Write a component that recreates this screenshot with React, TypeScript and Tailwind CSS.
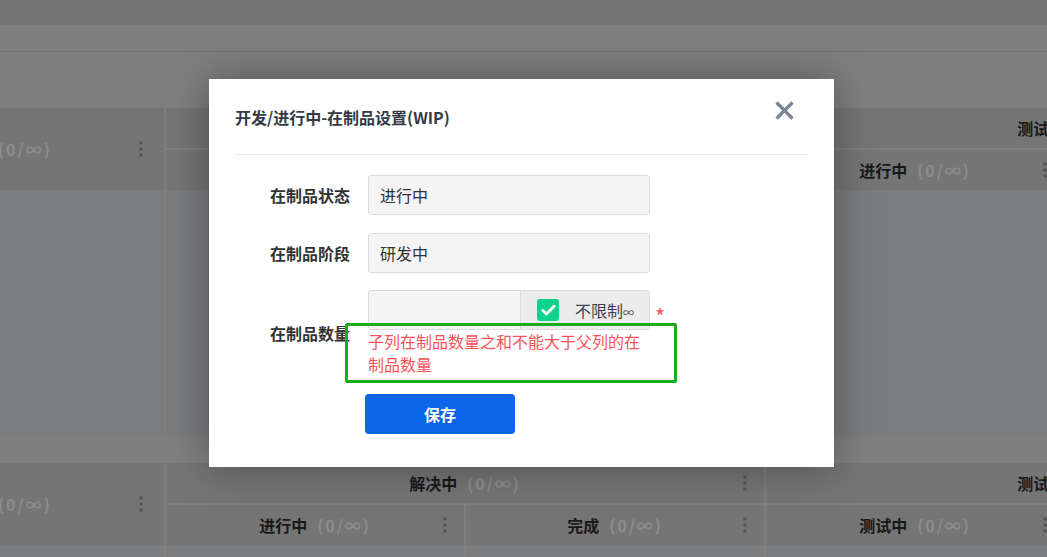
import { Check } from 'lucide-react';

const font = { fontFamily: '"Noto Sans CJK SC", "Noto Sans", sans-serif' };

function Dots() {
  return (
    <svg width="4" height="16" viewBox="0 0 4 16" className="shrink-0">
      <circle cx="2" cy="2" r="1.8" fill="#9b9b9b" />
      <circle cx="2" cy="8" r="1.8" fill="#9b9b9b" />
      <circle cx="2" cy="14" r="1.8" fill="#9b9b9b" />
    </svg>
  );
}

function Count() {
  return <span className="ml-[10px] text-[16px] font-bold tracking-[2px] text-white">(0/∞)</span>;
}

function HeadCell({ title, width }: { title: string; width: string }) {
  return (
    <div className={`${width} h-[40px] bg-[#d5d5d5] grid grid-cols-[1fr_auto_1fr] items-center`}>
      <span />
      <div className="flex items-center">
        <span className="text-[16px] font-bold text-[#2f2f2f]">{title}</span>
        <Count />
      </div>
      <div className="justify-self-end pr-[17px] flex items-center">
        <Dots />
      </div>
    </div>
  );
}

function Section({ top, subs, body }: { top: [string, string]; subs: [string, string, string, string]; body: number }) {
  return (
    <div className="flex flex-col">
      <div className="flex gap-[2px] bg-[#e7e7e7]">
        {/* first column, scrolled half out of view */}
        <div className="w-[164px] h-[82px] bg-[#d5d5d5] flex items-center justify-between overflow-hidden pr-[21px]">
          <div className="flex items-center -ml-[44px]">
            <span className="text-[16px] font-bold text-[#2f2f2f]">待办</span>
            <Count />
          </div>
          <Dots />
        </div>
        {[0, 1].map((g) => (
          <div key={g} className="w-[598px] flex flex-col gap-[2px]">
            <HeadCell title={top[g]} width="w-[598px]" />
            <div className="flex gap-[2px]">
              <HeadCell title={subs[g * 2]} width="w-[298px]" />
              <HeadCell title={subs[g * 2 + 1]} width="w-[298px]" />
            </div>
          </div>
        ))}
      </div>
      <div className="flex gap-[2px] bg-[#e7e7e7]" style={{ height: body }}>
        <div className="w-[164px] bg-[#e0e2e5]" />
        {[0, 1, 2, 3].map((c) => (
          <div key={c} className="w-[298px] bg-[#e0e2e5]" />
        ))}
      </div>
    </div>
  );
}

export default function App() {
  return (
    <div className="relative w-[1047px] h-[557px] overflow-hidden bg-[#e7e7e7]" style={font}>
      {/* board underneath */}
      <div className="w-[1400px]">
        <div className="h-[25px] bg-[#d6d6d6]" />
        <div className="h-[27px] bg-[#e8e8e8] border-b border-[#c8c8c8]" />
        <div className="h-[56px] bg-[#e7e7e7]" />
        <Section top={['研发', '测试']} subs={['待开发', '完成', '进行中', '完成']} body={247} />
        <div className="h-[26px] bg-[#e7e7e7]" />
        <Section top={['解决中', '测试']} subs={['进行中', '完成', '测试中', '完成']} body={40} />
      </div>

      {/* mask + dialog */}
      <div className="absolute inset-0 bg-black/45">
        <div className="ml-[209px] mt-[79px] w-[625px] h-[388px] bg-white shadow-[0_0_40px_rgba(0,0,0,0.35)]">
          <div className="h-[75px] flex items-center justify-between pl-[26px] pr-[40px]">
            <h3 className="text-[16px] font-bold text-[#333a44] mt-[1px]">开发/进行中-在制品设置(WIP)</h3>
            <button className="-mt-[12px]" aria-label="关闭">
              <svg width="19" height="19" viewBox="0 0 19 19">
                <path d="M1.5 1.5 L17.5 17.5 M17.5 1.5 L1.5 17.5" stroke="#7b8399" strokeWidth="3.2" />
              </svg>
            </button>
          </div>
          <div className="mx-[25px] border-t border-[#e8e8e8]" />

          <div className="mt-[20px] flex flex-col">
            <div className="flex items-center">
              <label className="w-[141px] text-right text-[16px] font-bold text-[#333]">在制品状态</label>
              <div className="ml-[18px] w-[282px] h-[40px] bg-[#f4f4f4] border border-[#dcdcdc] rounded-[3px] flex items-center pl-[11px] text-[16px] text-[#333]">
                进行中
              </div>
            </div>

            <div className="flex items-center mt-[18px]">
              <label className="w-[141px] text-right text-[16px] font-bold text-[#333]">在制品阶段</label>
              <div className="ml-[18px] w-[282px] h-[40px] bg-[#f4f4f4] border border-[#dcdcdc] rounded-[3px] flex items-center pl-[11px] text-[16px] text-[#333]">
                研发中
              </div>
            </div>

            <div className="relative flex items-center mt-[17px]">
              <label className="w-[141px] text-right text-[16px] font-bold text-[#333]">在制品数量</label>
              <div className="ml-[18px] flex flex-col">
                <div className="flex items-center">
                  <div className="w-[282px] h-[40px] bg-[#f4f4f4] border border-[#dcdcdc] rounded-[3px] flex">
                    <div className="w-[151px]" />
                    <div className="flex-1 bg-[#ececec] border-l border-[#dcdcdc] flex items-center pl-[16px]">
                      <span className="w-[22px] h-[22px] rounded-[3px] bg-[#10d48e] flex items-center justify-center">
                        <Check className="w-[17px] h-[17px] text-white" strokeWidth={4} />
                      </span>
                      <span className="ml-[16px] text-[16px] text-[#3b3f4f]">
                        不限制<span className="text-[11px]">∞</span>
                      </span>
                    </div>
                  </div>
                  <span className="ml-[5px] mt-[10px] text-[22px] leading-none text-[#f5535b]">*</span>
                </div>
                <p className="w-[282px] text-[16px] leading-[23px] text-[#f5535b]">
                  子列在制品数量之和不能大于父列的在制品数量
                </p>
              </div>
              <div className="absolute left-[136px] top-[33px] w-[332px] h-[60px] border-[3px] border-[#1aac1a] rounded-[2px]" />
            </div>

            <div className="ml-[156px] mt-[18px]">
              <button className="w-[150px] h-[40px] rounded-[4px] bg-[#0b65e8] text-white text-[16px] font-bold">
                保存
              </button>
            </div>
          </div>
        </div>
      </div>
    </div>
  );
}
